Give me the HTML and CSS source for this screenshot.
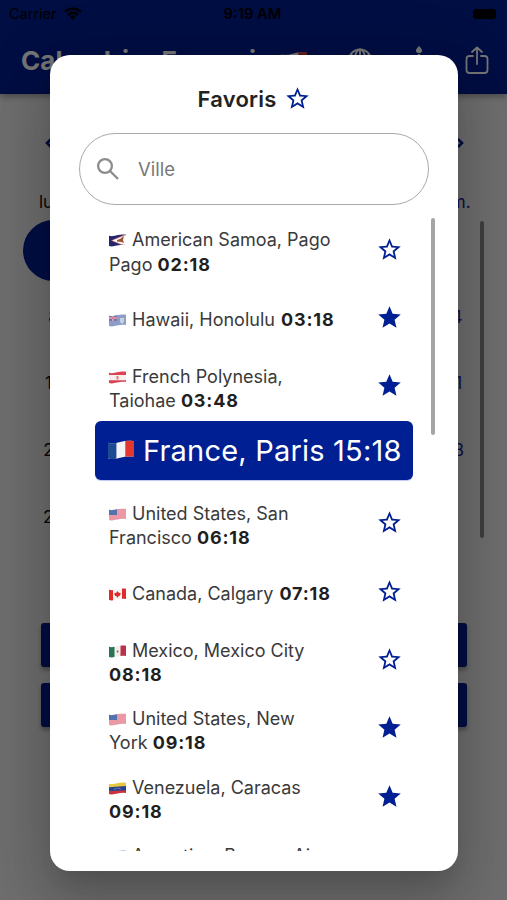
FILE: index.html
```html
<!DOCTYPE html>
<html lang="fr">
<head>
<meta charset="utf-8">
<title>Favoris</title>
<link rel="stylesheet" href="styles.css">
</head>
<body>
<svg class="defs" width="0" height="0" aria-hidden="true">
  <defs>
    <clipPath id="wave"><path d="M0 1.700C3 2.600 5 1.900 8 1.200S14 .2 17 .8V11C14 10.400 11 10.800 8 11.500S3 12.800 0 12Z"/></clipPath>
    <symbol id="star" viewBox="0 0 24 24"><path d="M12 17.270 18.180 21l-1.640-7.030L22 9.240l-7.190-.61L12 2 9.190 8.630 2 9.240l5.460 4.730L5.820 21z"/></symbol>
    <symbol id="star-o" viewBox="0 0 24 24"><path d="m22 9.240-7.190-.62L12 2 9.190 8.630 2 9.240l5.460 4.730L5.820 21 12 17.270 18.180 21l-1.630-7.030L22 9.240zM12 15.400l-3.760 2.270 1-4.280-3.320-2.880 4.380-.38L12 6.100l1.710 4.040 4.380.38-3.320 2.880 1 4.280L12 15.400z"/></symbol>
    <symbol id="fr" viewBox="0 0 17 13"><g clip-path="url(#wave)"><path fill="#f4f4f6" d="M0 0h17v13H0z"/><path fill="#1d4b91" d="M0 0h5.500v13H0z"/><path fill="#e5362f" d="M11.300 0H17v13h-5.700z"/></g></symbol>
    <symbol id="us" viewBox="0 0 17 13"><g clip-path="url(#wave)"><path fill="#f3c3cb" d="M0 0h17v13H0z"/><path stroke="#e2707e" stroke-width="1" d="M0 2h17M0 4h17M0 6h17M0 8h17M0 10h17M0 12h17"/><path fill="#5172ae" d="M0 0h8v7H0z"/></g></symbol>
    <symbol id="as" viewBox="0 0 17 13"><g clip-path="url(#wave)"><path fill="#25246f" d="M0 0h17v13H0z"/><path fill="#d98a80" d="M2 6.500 17 0v13z"/><path fill="#fff" d="M3.500 6.500 17 1.200v10.600z"/><path fill="#9a5634" d="m8 6 3-1 4-3-1 4 1 3-3-1-4-.5z"/></g></symbol>
    <symbol id="hi" viewBox="0 0 17 13"><g clip-path="url(#wave)"><path fill="#8d9dc9" d="M0 0h17v13H0z"/><path fill="#6c79b0" d="M0 0h8v7H0z"/><path stroke="#f0dce5" stroke-width="1.700" d="M0 4h8M4 0v7"/><path stroke="#d55872" stroke-width=".9" d="M0 4h8M4 0v7"/><path fill="#c8d2d8" d="M11 4h4v4l-2 2-2-2z"/></g></symbol>
    <symbol id="pf" viewBox="0 0 17 13"><g clip-path="url(#wave)"><path fill="#f8f0ef" d="M0 0h17v13H0z"/><path fill="#dc4355" d="M0 0h17v4H0zM0 9.300h17V13H0z"/><path fill="#d78373" d="M7.500 5h2v3.500h-2z"/></g></symbol>
    <symbol id="ca" viewBox="0 0 17 13"><g clip-path="url(#wave)"><path fill="#f8f3f3" d="M0 0h17v13H0z"/><path fill="#e12b2b" d="M0 0h4v13H0zM13 0h4v13h-4zM8.500 3l1 1.500 2.500 1-1.500 2.500-1.500.5v1H8v-1l-1.800-.5L5 5.500l2.500-1z"/></g></symbol>
    <symbol id="mx" viewBox="0 0 17 13"><g clip-path="url(#wave)"><path fill="#f1efec" d="M0 0h17v13H0z"/><path fill="#297454" d="M0 0h5.500v13H0z"/><path fill="#bd304d" d="M11.500 0H17v13h-5.500z"/><path fill="#8d7e57" d="m7.500 6 1.500-1 .7 2-1.500 1z"/></g></symbol>
    <symbol id="ve" viewBox="0 0 17 13"><g clip-path="url(#wave)"><path fill="#e8c83e" d="M0 0h17v13H0z"/><path fill="#29428c" d="M0 5.200 17 4v5L0 9.500z"/><path fill="#c93142" d="m0 9.300 17-1V13H0z"/><path fill="none" stroke="#d9def0" stroke-width=".7" stroke-dasharray=".7 .7" d="M5 7.800Q8.500 5 12 7.400"/></g></symbol>
    <symbol id="ar" viewBox="0 0 17 13"><g clip-path="url(#wave)"><path fill="#73a9dc" d="M0 0h17v13H0z"/><path fill="#fff" d="M0 5h17v4H0z"/></g></symbol>
  </defs>
</svg>

<div class="screen">
  <header class="appbar">
    <div class="status">
      <div class="carrier">Carrier
        <svg width="18" height="14" viewBox="0 0 18 14" fill="none" stroke="#000" stroke-width="2.500"><path d="M1 4.800Q9-1.800 17 4.800M4 8Q9 3.800 14 8"/><path fill="#000" stroke="none" d="m9 13 3-3.300Q9 7.500 6 9.700z"/></svg>
      </div>
      <div class="clock">9:19 AM</div>
      <div class="power"><span class="battery"></span></div>
    </div>
    <div class="toolbar">
      <h1>Calendrier Français</h1>
      <svg class="title-flag" viewBox="0 0 17 13"><use href="#fr"/></svg>
      <div class="actions">
        <svg width="26" height="28" viewBox="0 0 26 28" fill="none" stroke="#fff" stroke-width="1.900"><circle cx="13" cy="14" r="11.500"/><ellipse cx="13" cy="14" rx="5.500" ry="11.500"/><path d="M13 2.500v23M1.500 14h23M3.500 8q9.500 4 19 0"/></svg>
        <svg width="12" height="30" viewBox="0 0 12 30" fill="#fff"><path d="M6 0q5.500 5 1.500 7H4.500Q.5 5 6 0zM4.800 8h2.400v22H4.800z"/></svg>
        <svg width="24" height="29" viewBox="0 0 24 29" fill="none" stroke="#fff" stroke-width="1.800" stroke-linejoin="round" stroke-linecap="round"><path d="M8 10H4.500Q1.500 10 1.500 13v11q0 3 3 3h15q3 0 3-3V13q0-3-3-3H16M12 18V1.500M7 6l5-4.500L17 6"/></svg>
      </div>
    </div>
  </header>
  <main class="calendar">
    <div class="month">
      <svg width="9" height="12" viewBox="0 0 9 12"><path d="m7 2-4 4 4 4"/></svg>
      <svg width="9" height="12" viewBox="0 0 9 12"><path d="m2 2 4 4-4 4"/></svg>
    </div>
    <div class="week names"><span>lun.</span><span class="sunday">dim.</span></div>
    <div class="week"><span class="chosen"></span></div>
    <div class="week"><span>8</span><span class="sunday">14</span></div>
    <div class="week"><span>15</span><span class="sunday">21</span></div>
    <div class="week"><span>22</span><span class="sunday">28</span></div>
    <div class="week"><span>29</span></div>
    <div class="buttons"><div class="button"></div><div class="button"></div></div>
    <div class="page-thumb"></div>
  </main>
</div>

<div class="scrim">
  <section class="dialog">
    <h2>Favoris <svg class="star"><use href="#star-o"/></svg></h2>
    <div class="search">
      <svg width="24" height="24" viewBox="0 0 24 24" fill="none" stroke="#8c8c8c" stroke-width="2.300"><circle cx="9" cy="9" r="6.900"/><path d="m14 14 8 8"/></svg>
      <span>Ville</span>
    </div>
    <div class="list">
      <div class="row"><p><svg class="flag"><use href="#as"/></svg>American Samoa, Pago<br>Pago <b>02:18</b></p><svg class="star"><use href="#star-o"/></svg></div>
      <div class="row single"><p><svg class="flag"><use href="#hi"/></svg>Hawaii, Honolulu <b>03:18</b></p><svg class="star"><use href="#star"/></svg></div>
      <div class="row"><p><svg class="flag"><use href="#pf"/></svg>French Polynesia,<br>Taiohae <b>03:48</b></p><svg class="star"><use href="#star"/></svg></div>
      <div class="row current"><div class="card"><svg class="flag"><use href="#fr"/></svg><span>France, Paris 15:18</span></div></div>
      <div class="row"><p><svg class="flag"><use href="#us"/></svg>United States, San<br>Francisco <b>06:18</b></p><svg class="star"><use href="#star-o"/></svg></div>
      <div class="row single"><p><svg class="flag"><use href="#ca"/></svg>Canada, Calgary <b>07:18</b></p><svg class="star"><use href="#star-o"/></svg></div>
      <div class="row"><p><svg class="flag"><use href="#mx"/></svg>Mexico, Mexico City<br><b>08:18</b></p><svg class="star"><use href="#star-o"/></svg></div>
      <div class="row"><p><svg class="flag"><use href="#us"/></svg>United States, New<br>York <b>09:18</b></p><svg class="star"><use href="#star"/></svg></div>
      <div class="row"><p><svg class="flag"><use href="#ve"/></svg>Venezuela, Caracas<br><b>09:18</b></p><svg class="star"><use href="#star"/></svg></div>
      <div class="row last"><p><svg class="flag"><use href="#ar"/></svg>Argentina, Buenos Aires</p></div>
      <div class="thumb"></div>
    </div>
  </section>
</div>
</body>
</html>
```
FILE: styles.css
```css
* { box-sizing: border-box; }
body { margin: 0; font-family: Inter, "Liberation Sans", sans-serif; color: #222; }
h1, h2, p { margin: 0; }
svg { flex: none; }
.defs { position: absolute; }
.screen { width: 507px; height: 900px; overflow: hidden; background: #f0f0f0; }

.appbar { height: 94px; background: #001f93; box-shadow: 0 3px 6px rgba(0, 0, 0, .3); }
.status { height: 27px; display: grid; grid-template-columns: 1fr auto 1fr; align-items: center; padding: 0 11px 0 9px; font-size: 14.500px; color: #000; }
.carrier { display: flex; align-items: center; gap: 7px; }
.clock { font-weight: 600; font-size: 14.800px; }
.power { display: flex; justify-content: flex-end; }
.battery { width: 23px; height: 10px; border-radius: 3px; background: #000; }
.toolbar { height: 67px; padding: 0 18px 0 21px; display: flex; align-items: center; color: #fff; }
h1 { font-size: 26px; font-weight: 700; letter-spacing: .1px; width: 257px; white-space: nowrap; }
.title-flag { width: 26px; height: 21px; margin: 2px 0 0 3px; }
.actions { margin-left: auto; display: flex; align-items: center; gap: 40px; }

.calendar { position: relative; padding: 43px 20px 0; font-size: 17px; color: #111; }
.month { display: flex; justify-content: space-between; padding: 0 22px 0 24px; height: 12px; fill: none; stroke: #001f93; stroke-width: 2.500; }
.week { height: 66.600px; display: flex; justify-content: space-between; align-items: center; }
.week span { width: 67px; text-align: center; }
.week .sunday { color: #28289a; }
.names { height: 34px; margin: 36px 0 -2px; }
.week .chosen { width: 61px; height: 61px; margin-left: 3px; border-radius: 50%; background: #001f93; }
.buttons { margin: 73px 0 0 21px; width: 426px; display: grid; gap: 16px; }
.button { height: 44px; border-radius: 3px; background: #001f93; box-shadow: 0 3px 4px rgba(0, 0, 0, .3); }
.page-thumb { position: absolute; left: 480px; top: 127px; width: 4px; height: 317px; border-radius: 2px; background: #8a8a8a; }

.scrim { position: absolute; inset: 0; height: 900px; overflow: hidden; padding: 55px 49px 0 50px; background: rgba(0, 0, 0, .54); }
.dialog { height: 815.500px; border-radius: 20px; background: #fff; box-shadow: 0 15px 20px -9px rgba(0, 0, 0, .1), 0 32px 51px 4px rgba(0, 0, 0, .13), 0 12px 62px 11px rgba(0, 0, 0, .12); }
h2 { height: 78px; padding: 9px 0 0; display: flex; align-items: center; justify-content: center; gap: 7px; font-size: 22px; font-weight: 600; letter-spacing: .25px; }
.star { width: 27px; height: 27px; fill: #001f93; }
.search { height: 72px; margin: 0 29px; padding-left: 16px; display: flex; align-items: center; gap: 18px; border: 1.300px solid #aaa; border-radius: 36px; font-size: 18.500px; color: #777; }
.list { position: relative; height: 633px; margin-top: 13px; padding-left: 59px; overflow: hidden; }
.row { height: 68.400px; display: flex; align-items: center; }
.row p { width: 267px; font-size: 18px; line-height: 24.300px; white-space: nowrap; color: #3a3a3a; padding-top: 1px; }
.row.single p { padding: 0 0 1px; }
.row b { font-weight: 700; color: #1f1f1f; letter-spacing: .85px; margin-left: 1px; }
.row br + b { margin-left: 0; }
.row .star { margin-bottom: 6px; }
.row .flag { width: 17px; height: 13px; margin-right: 6px; vertical-align: -1px; }
.current { align-items: flex-start; }
.card { height: 58.500px; width: 318px; flex: none; margin: -2px 0 0 -14px; padding-left: 13px; border-radius: 6px; background: #001f93; color: #fff; font-size: 29px; letter-spacing: .2px; display: flex; align-items: center; white-space: nowrap; box-shadow: 0 1px 1px rgba(40, 70, 220, .3); }
.row .card .flag { width: 26px; height: 20px; margin: 0 9px 0 0; }
.row.last { align-items: flex-start; padding-top: 9px; }
.thumb { position: absolute; left: 381px; top: 0; width: 4px; height: 217px; border-radius: 2px; background: #a5a5a5; }
```
